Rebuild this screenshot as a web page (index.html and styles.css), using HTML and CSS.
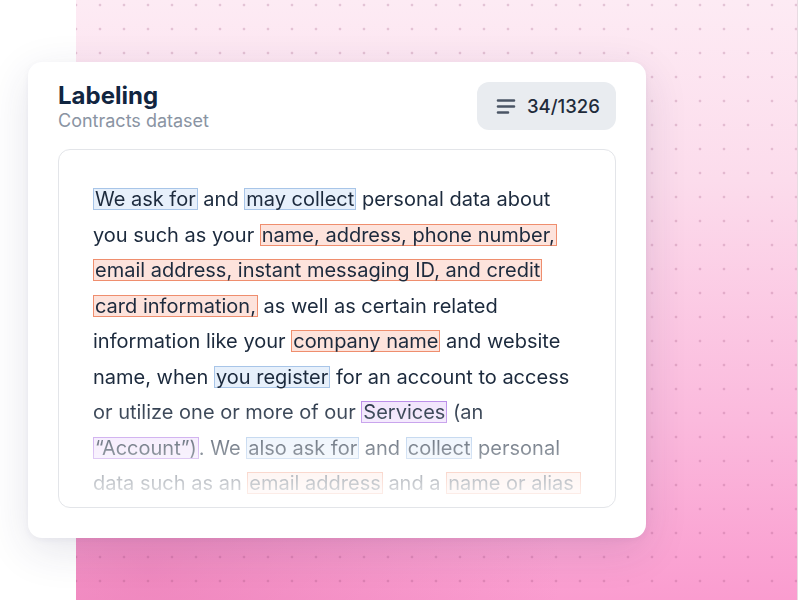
FILE: index.html
```html
<!DOCTYPE html>
<html lang="en">
<head>
  <meta charset="UTF-8">
  <title>Labeling - Contracts dataset</title>
  <link rel="stylesheet" href="styles.css">
</head>
<body>

  <div class="stage">
    <div class="backdrop"></div>

    <div class="card">
      <div class="card-head">
        <div>
          <h2>Labeling</h2>
          <div class="subtitle">Contracts dataset</div>
        </div>
        <div class="counter">
          <svg width="20" height="16" viewBox="0 0 20 16">
            <path d="M2 2.5h16M2 8.5h16M2 14.5h10" stroke="#4b5565" stroke-width="2.6" stroke-linecap="round" fill="none"/>
          </svg>
          <span>34/1326</span>
        </div>
      </div>

      <div class="doc">
        <div class="doc-text">
          <span class="line"><mark class="hl blue">We ask for</mark> and <mark class="hl blue">may collect</mark> personal data about</span>
          <span class="line">you such as your <mark class="hl red">name, address, phone number,</mark></span>
          <span class="line"><mark class="hl red">email address, instant messaging ID, and credit</mark></span>
          <span class="line"><mark class="hl red">card information,</mark> as well as certain related</span>
          <span class="line">information like your <mark class="hl red">company name</mark> and website</span>
          <span class="line">name, when <mark class="hl blue">you register</mark> for an account to access</span>
          <span class="line">or utilize one or more of our <mark class="hl purple">Services</mark> (an</span>
          <span class="line"><mark class="hl purple">“Account”)</mark>. We <mark class="hl blue">also ask for</mark> and <mark class="hl blue">collect</mark> personal</span>
          <span class="line">data such as an <mark class="hl red">email address</mark> and a <mark class="hl red">name or alias&nbsp;</mark></span>
        </div>
      </div>
    </div>
  </div>

</body>
</html>
```

FILE: styles.css
```css
* {
  box-sizing: border-box;
  font-family: 'Inter', 'Noto Sans', sans-serif;
}

body {
  margin: 0;
  padding: 0;
  background-color: #fff;
  width: 800px;
  height: 600px;
  overflow: hidden;
}

.stage {
  display: grid;
  width: 800px;
  height: 600px;
}

/* pink dotted panel behind the card */
.backdrop {
  grid-area: 1 / 1;
  margin-left: 76px;
  width: 721px;
  height: 600px;
  background-color: #fbc6e1;
  background-image:
    radial-gradient(circle, rgba(150, 70, 115, 0.24) 1.1px, transparent 1.7px),
    radial-gradient(ellipse at 10% 95%, rgba(226, 110, 170, 0.45), transparent 45%),
    linear-gradient(to bottom, #fdebf4 0%, #fcdcec 30%, #fbbadd 70%, #fa9ccf 100%);
  background-size: 24px 24px, 100% 100%, 100% 100%;
  background-position: 12px -7px, 0 0, 0 0;
  box-shadow: 1px 0 0 #e8dbe2;
}

.card {
  grid-area: 1 / 1;
  align-self: start;
  justify-self: start;
  margin: 62px 0 0 28px;
  width: 618px;
  height: 476px;
  padding: 20px 30px 30px 30px;
  background-color: #fff;
  border-radius: 14px;
  box-shadow: 0 12px 44px rgba(40, 40, 90, 0.12), 0 2px 6px rgba(40, 40, 90, 0.05);
  display: flex;
  flex-direction: column;
  gap: 17px;
}

.card-head {
  display: flex;
  justify-content: space-between;
  align-items: flex-start;
}

h2 {
  margin: 0;
  font-size: 24px;
  line-height: 28px;
  font-weight: 700;
  color: #112540;
}

.subtitle {
  font-size: 18px;
  line-height: 22px;
  color: #8a94a3;
}

.counter {
  width: 139px;
  height: 48px;
  display: flex;
  align-items: center;
  gap: 11px;
  padding-left: 19px;
  background-color: #e9ecf0;
  border-radius: 12px;
  font-size: 18.5px;
  font-weight: 500;
  color: #1f2b3b;
}

.counter svg {
  display: block;
}

.doc {
  flex: 1;
  border: 1.5px solid #e3e5e9;
  border-radius: 12px;
  padding: 32px 20px 0 34px;
  overflow: hidden;
}

.doc-text {
  font-size: 20px;
  line-height: 35.5px;
  color: #1c2a3d;
  white-space: nowrap;
  -webkit-mask-image: linear-gradient(to bottom, #000 67%, rgba(0, 0, 0, 0.17) 97%);
  mask-image: linear-gradient(to bottom, #000 67%, rgba(0, 0, 0, 0.17) 97%);
}

.line {
  display: block;
}

.hl {
  display: inline-block;
  line-height: 20px;
  padding: 0 1px;
  color: inherit;
  border: 1.5px solid;
}

.hl.blue {
  background-color: #e7f0fb;
  border-color: #a8c5e8;
}

.hl.red {
  background-color: #fde3dc;
  border-color: #ef8e6e;
}

.hl.purple {
  background-color: #f1e4fc;
  border-color: #b98ae8;
}
```
